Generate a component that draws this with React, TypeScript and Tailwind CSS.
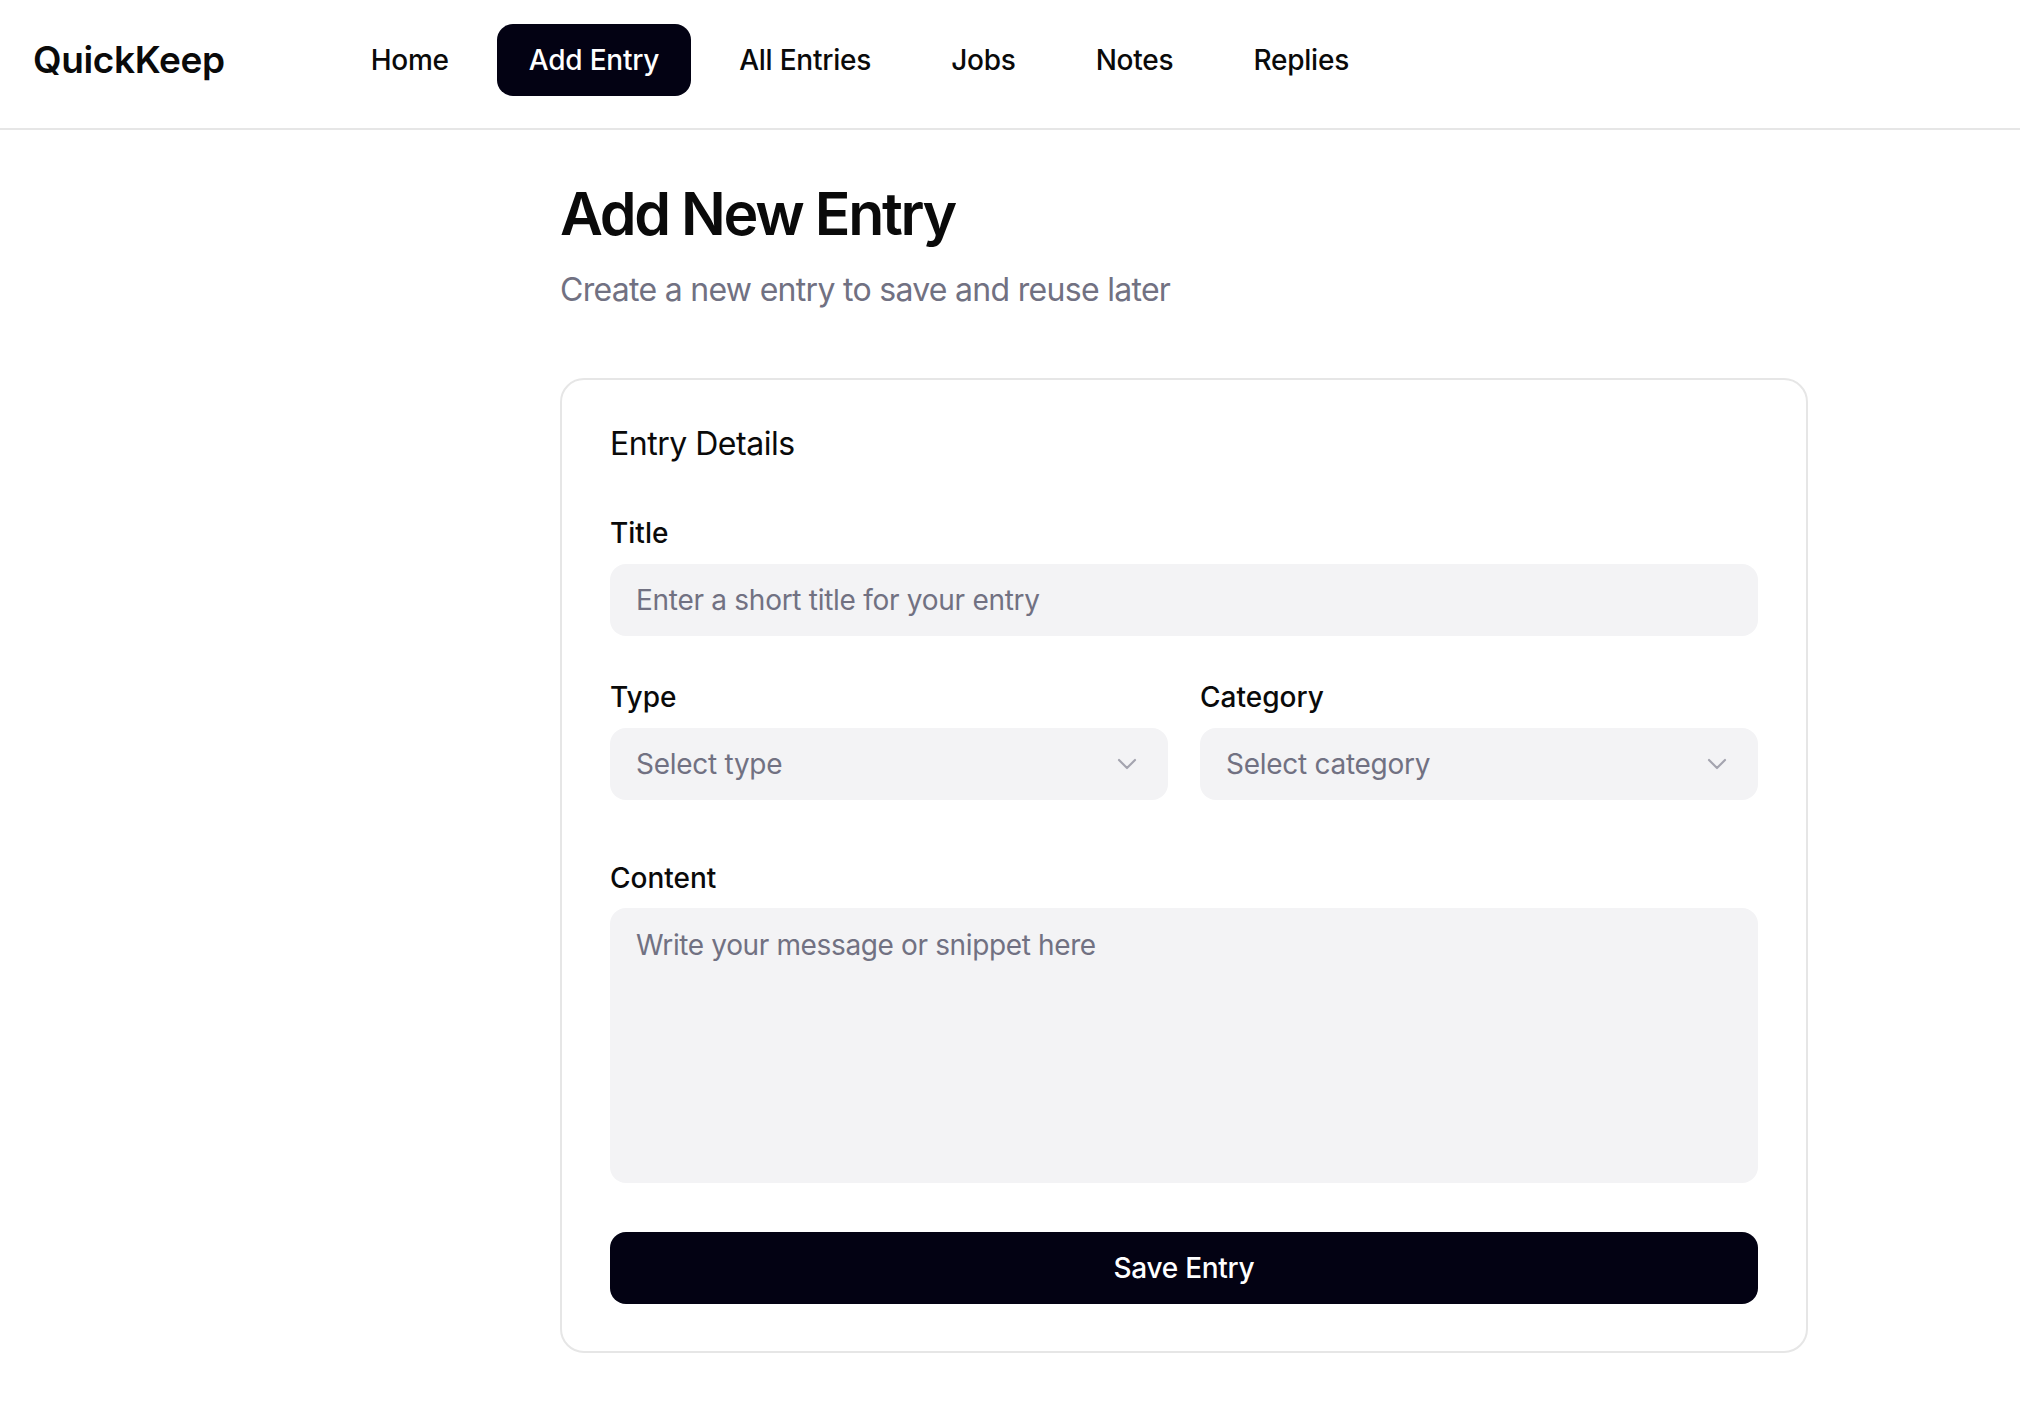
import React from "react";

function Chevron() {
  return (
    <svg width="32" height="32" viewBox="0 0 24 24" fill="none" stroke="currentColor" strokeWidth="1.6" strokeLinecap="round" strokeLinejoin="round" className="text-[#717182] opacity-60">
      <path d="m6 9 6 6 6-6" />
    </svg>
  );
}

function SelectBox({ placeholder }: { placeholder: string }) {
  return (
    <button
      type="button"
      className="flex h-[72px] w-full items-center justify-between rounded-[16px] bg-[#f3f3f5] pl-[26px] pr-[25px] text-left text-[28px] tracking-[-0.01em] text-[#717182]"
    >
      <span>{placeholder}</span>
      <Chevron />
    </button>
  );
}

export default function App() {
  const nav = ["Home", "Add Entry", "All Entries", "Jobs", "Notes", "Replies"];
  return (
    <div className="min-h-screen bg-white font-['Inter','Noto_Sans',sans-serif] text-[#0a0a0a]">
      <header className="h-[130px] border-b-2 border-[#e6e6e6]">
        <div className="flex h-[120px] items-center pl-[33px]">
          <span className="text-[37px] font-semibold tracking-[-0.01em]">QuickKeep</span>
          <nav className="ml-[114px] flex items-center gap-[16px]">
            {nav.map((n) => (
              <a
                key={n}
                className={
                  n === "Add Entry"
                    ? "flex h-[72px] items-center rounded-[16px] bg-[#030213] px-[32px] text-[28px] font-medium tracking-[-0.008em] text-white"
                    : "flex h-[72px] items-center rounded-[16px] px-[32px] text-[28px] font-medium tracking-[-0.008em] text-[#0a0a0a]"
                }
              >
                {n}
              </a>
            ))}
          </nav>
        </div>
      </header>

      <main className="pl-[560px] pt-[48px]">
        <div className="w-[1248px]">
          <h1 className="text-[59px] font-semibold leading-[72px] tracking-[-0.04em]">Add New Entry</h1>
          <p className="mt-[16px] text-[32px] leading-[48px] tracking-[-0.022em] text-[#717182]">
            Create a new entry to save and reuse later
          </p>

          <div className="mt-[64px] rounded-[24px] border-2 border-[#e6e6e6] px-[48px] pb-[47px] pt-[48px]">
            <h2 className="text-[32px] leading-none tracking-[-0.015em]">Entry Details</h2>

            <form className="mt-[59px] flex flex-col">
              <label className="text-[28px] font-medium leading-none">Title</label>
              <input
                className="mt-[17px] h-[72px] w-full rounded-[16px] bg-[#f3f3f5] px-[26px] text-[28px] tracking-[-0.01em] outline-none placeholder:text-[#717182]"
                placeholder="Enter a short title for your entry"
              />

              <div className="mt-[47px] grid grid-cols-2 gap-[32px]">
                <div className="flex flex-col">
                  <label className="text-[28px] font-medium leading-none">Type</label>
                  <div className="mt-[17px]">
                    <SelectBox placeholder="Select type" />
                  </div>
                </div>
                <div className="flex flex-col">
                  <label className="text-[28px] font-medium leading-none">Category</label>
                  <div className="mt-[17px]">
                    <SelectBox placeholder="Select category" />
                  </div>
                </div>
              </div>

              <label className="mt-[64px] text-[28px] font-medium leading-none">Content</label>
              <textarea
                className="mt-[16px] h-[275px] w-full resize-none rounded-[16px] bg-[#f3f3f5] px-[26px] py-[16px] text-[28px] leading-[42px] tracking-[-0.013em] outline-none placeholder:text-[#717182]"
                placeholder="Write your message or snippet here"
              />

              <button
                type="button"
                className="mt-[49px] h-[72px] w-full rounded-[16px] bg-[#030213] text-[28px] font-medium tracking-[-0.01em] text-white"
              >
                Save Entry
              </button>
            </form>
          </div>
        </div>
      </main>
    </div>
  );
}
